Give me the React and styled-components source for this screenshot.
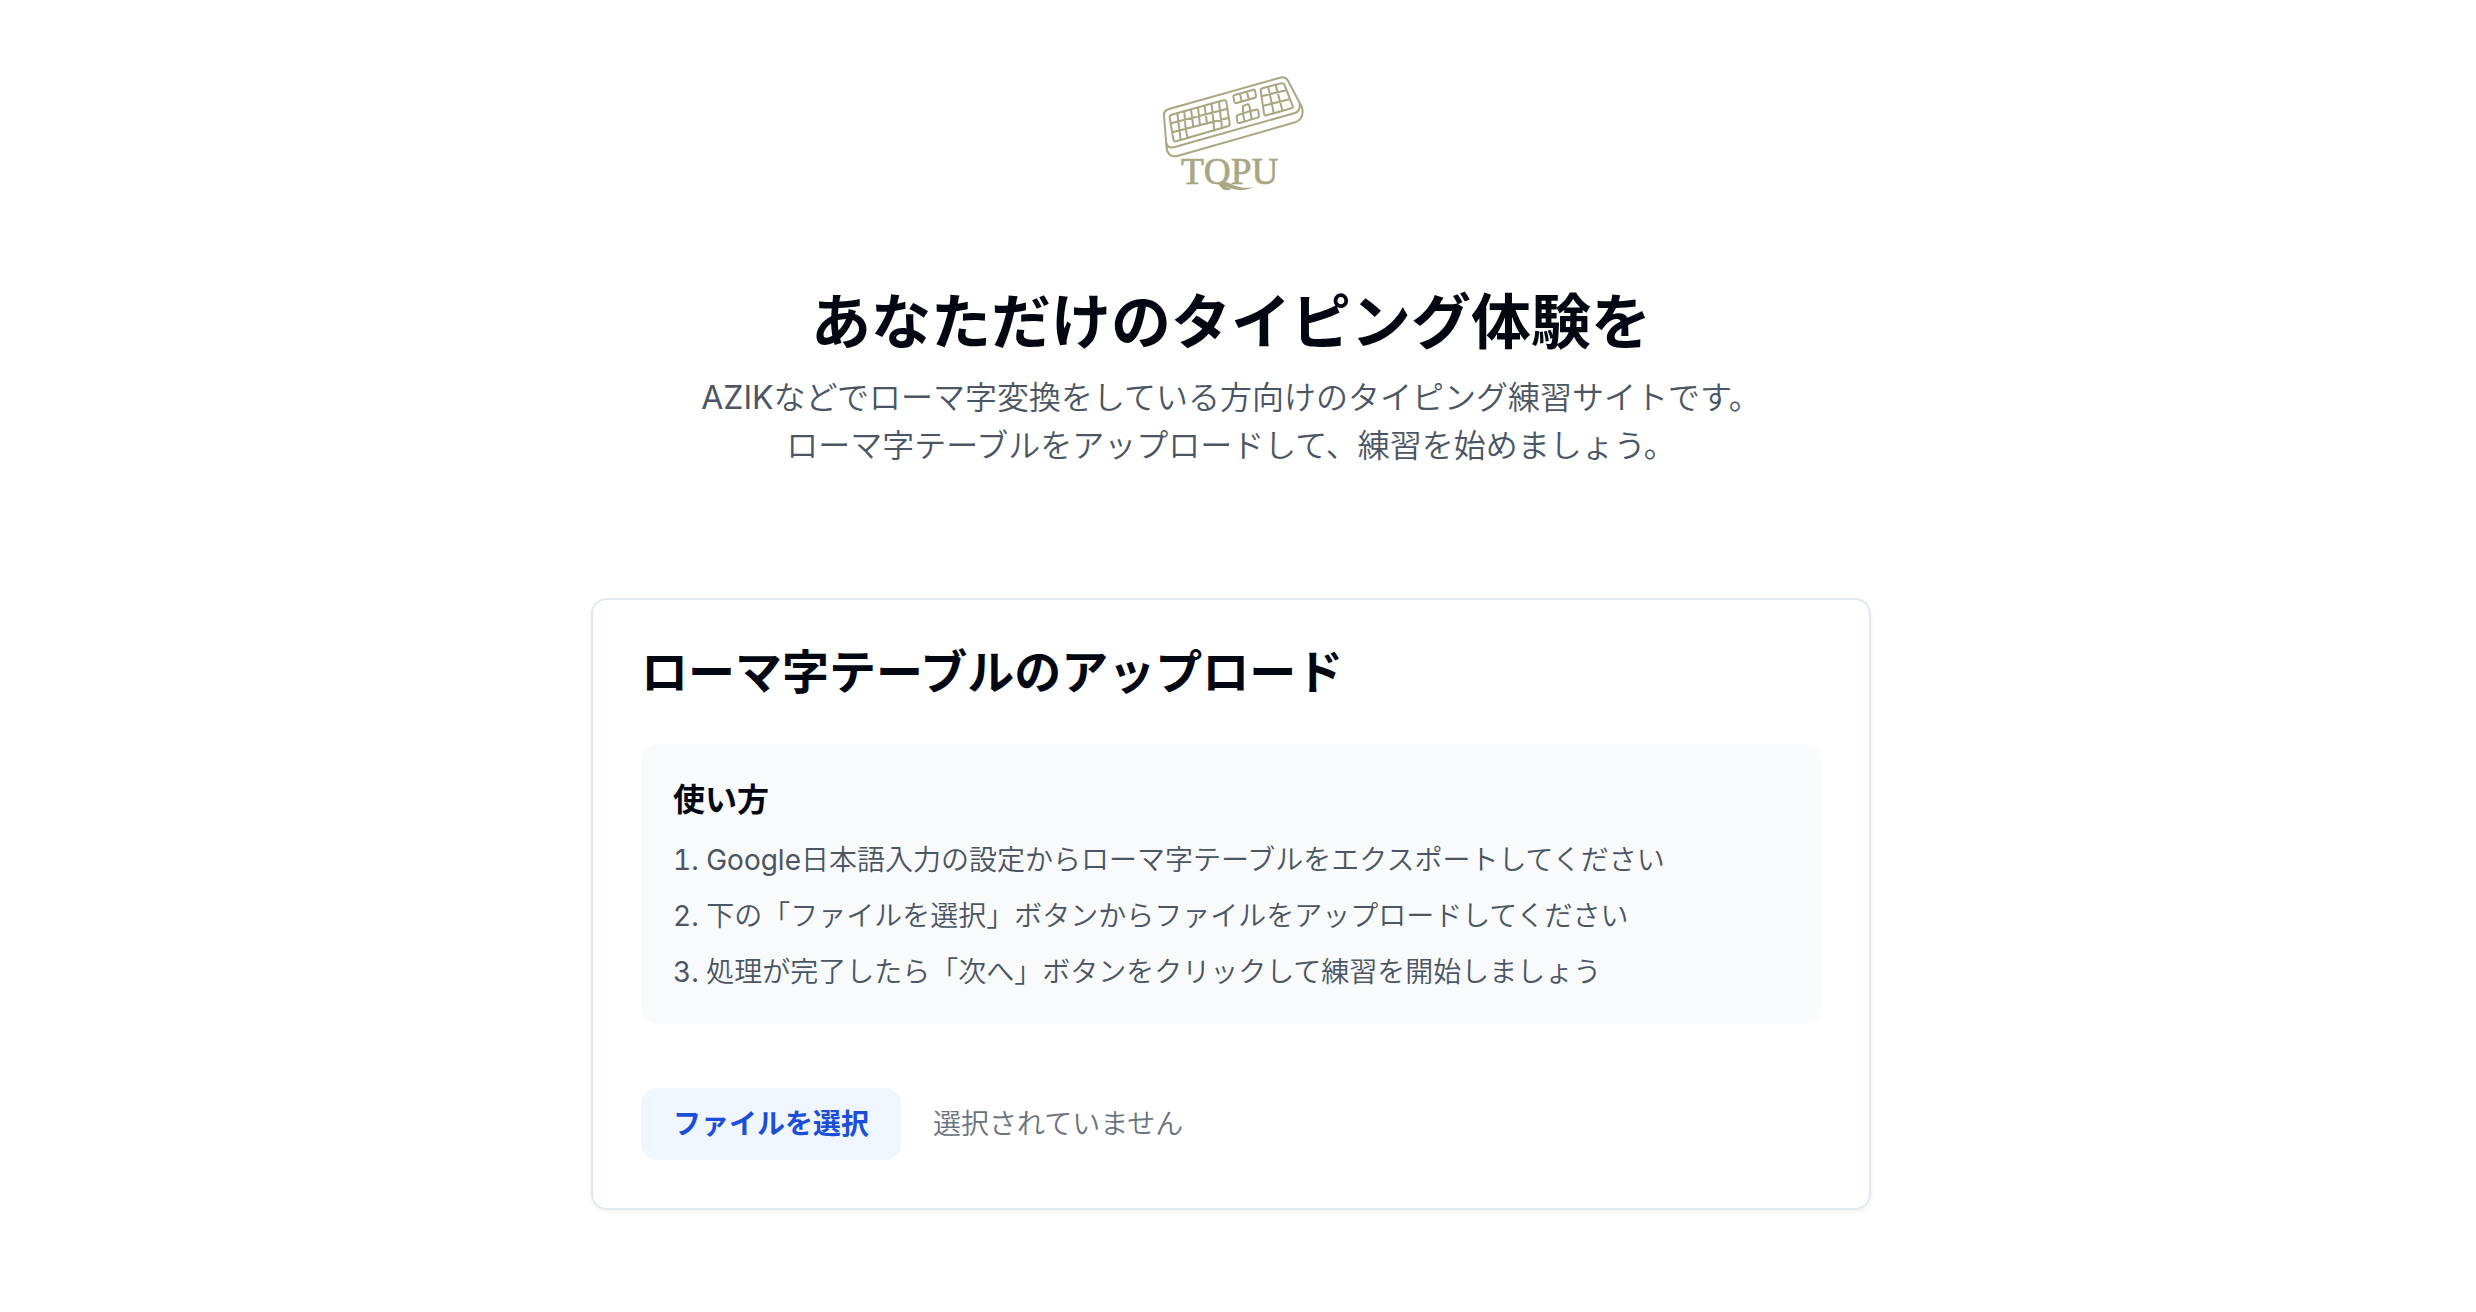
import React, { useRef, useState } from "react";
import styled, { createGlobalStyle } from "styled-components";

const GlobalStyle = createGlobalStyle`
  *, *::before, *::after { box-sizing: border-box; }
  body {
    margin: 0;
    background: #ffffff;
    color: #030712;
    font-family: Inter, "Noto Sans CJK JP", sans-serif;
  }
  h1, h2, h3, p, ol { margin: 0; }
`;

const lightText = `Inter, "Noto Sans CJK JP DemiLight", "Noto Sans CJK JP", sans-serif`;

const Page = styled.div`
  display: flex;
  flex-direction: column;
  align-items: center;
  padding: 60px 46px 96px 32px;
`;

const LogoLink = styled.a`
  display: block;
  line-height: 0;
  color: #aaa682;
`;

const Hero = styled.header`
  display: flex;
  flex-direction: column;
  align-items: center;
  gap: 20px;
  margin: 80px 0 128px;
  text-align: center;
`;

const Title = styled.h1`
  font-size: 60px;
  line-height: 64px;
  font-weight: 700;
`;

const Lead = styled.p`
  font-family: ${lightText};
  font-size: 32px;
  line-height: 48px;
  color: #4b5563;
`;

const Card = styled.main`
  width: 100%;
  max-width: 1280px;
  padding: 48px;
  border: 2px solid #e2e8f0;
  border-radius: 16px;
  box-shadow: 0 2px 4px rgba(0, 0, 0, 0.05);
`;

const CardTitle = styled.h2`
  font-size: 47px;
  line-height: 48px;
  font-weight: 600;
`;

const Guide = styled.section`
  margin: 48px 0 64px;
  padding: 32px;
  border-radius: 16px;
  background: #f9fafb;
`;

const GuideTitle = styled.h3`
  font-size: 32px;
  line-height: 48px;
  font-weight: 600;
`;

const Steps = styled.ol`
  display: flex;
  flex-direction: column;
  gap: 16px;
  margin-top: 16px;
  padding: 0;
  list-style-position: inside;
  font-family: ${lightText};
  font-size: 28px;
  line-height: 40px;
  color: #4b5563;
`;

const FileRow = styled.div`
  display: flex;
  align-items: center;
  gap: 32px;
  font-size: 28px;
  line-height: 40px;
`;

const FileButton = styled.button`
  padding: 16px 32px;
  border: 0;
  border-radius: 16px;
  background: #eff6ff;
  color: #1d4ed8;
  font: inherit;
  font-weight: 600;
  cursor: pointer;
`;

const FileName = styled.span`
  font-family: ${lightText};
  color: #6b7280;
`;

function Logo() {
  return (
    <svg width="160" height="150" viewBox="33 0 480 450" role="img" aria-label="TQPU">
      <g fill="none" stroke="currentColor" strokeWidth="6" strokeLinejoin="round" strokeLinecap="round">
        <path d="M72 168 Q70 152 87 147 L420 53 Q436 49 444 62 L486 142 Q494 176 466 187 L112 288 Q84 294 80 264 Z" />
        <path d="M79 250 Q84 266 104 261 L462 160 Q482 154 479 132" />
        <path d="M89 172 Q88 166 95 164 L250 121 Q258 119 259 126 L269 190 Q270 197 263 199 L109 244 Q101 246 100 238 Z" />
        <path d="M93 190 L260 147 M97 217 L267 173 M137 208 L143 234 M112 159 L122 240 M133 154 L137 208 M153 148 L160 201 M174 143 L180 196 M194 138 L201 191 M215 133 L223 212 M237 127 L246 205" />
        <path d="M280 110 Q279 106 284 105 L340 89 Q344 88 345 93 L348 108 Q348 112 345 113 L290 129 Q284 130 283 126 Z M300 101 L305 124 M321 95 L326 118" />
        <path d="M309 138 L322 133 Q327 132 328 137 L331 153 L348 149 Q354 148 355 153 L357 168 Q357 172 352 173 L299 189 Q293 190 292 185 L290 170 Q290 166 294 165 L309 160 Z M309 160 L331 153 M309 160 L314 184 M331 153 L335 178" />
        <path d="M362 92 Q361 87 366 85 L424 70 Q430 68 433 73 L458 138 Q460 143 454 145 L380 166 Q373 168 372 160 Z M367 108 L440 90 M371 137 L448 118 M385 82 L401 158 M407 76 L427 151" />
      </g>
      <text x="123" y="372" fontFamily="'Liberation Serif', serif" fontSize="112" fill="currentColor" stroke="currentColor" strokeWidth="2">
        TQPU
      </text>
      <path d="M232 372 C254 374 268 388 298 390 C318 391 332 386 340 380 C322 386 304 384 288 378 C274 373 264 364 246 366 Z" fill="currentColor" />
    </svg>
  );
}

const STEPS = [
  "Google日本語入力の設定からローマ字テーブルをエクスポートしてください",
  "下の「ファイルを選択」ボタンからファイルをアップロードしてください",
  "処理が完了したら「次へ」ボタンをクリックして練習を開始しましょう",
];

export default function App() {
  const picker = useRef(null);
  const [fileName, setFileName] = useState("");

  return (
    <Page lang="ja">
      <GlobalStyle />
      <LogoLink href="/">
        <Logo />
      </LogoLink>
      <Hero>
        <Title>あなただけのタイピング体験を</Title>
        <Lead>
          AZIKなどでローマ字変換をしている方向けのタイピング練習サイトです。
          <br />
          ローマ字テーブルをアップロードして、練習を始めましょう。
        </Lead>
      </Hero>
      <Card>
        <CardTitle>ローマ字テーブルのアップロード</CardTitle>
        <Guide>
          <GuideTitle>使い方</GuideTitle>
          <Steps>
            {STEPS.map((step) => (
              <li key={step}>{step}</li>
            ))}
          </Steps>
        </Guide>
        <FileRow>
          <FileButton type="button" onClick={() => picker.current.click()}>
            ファイルを選択
          </FileButton>
          <input
            ref={picker}
            type="file"
            hidden
            aria-label="ファイルを選択"
            onChange={(event) => setFileName(event.target.files[0]?.name ?? "")}
          />
          <FileName>{fileName || "選択されていません"}</FileName>
        </FileRow>
      </Card>
    </Page>
  );
}
